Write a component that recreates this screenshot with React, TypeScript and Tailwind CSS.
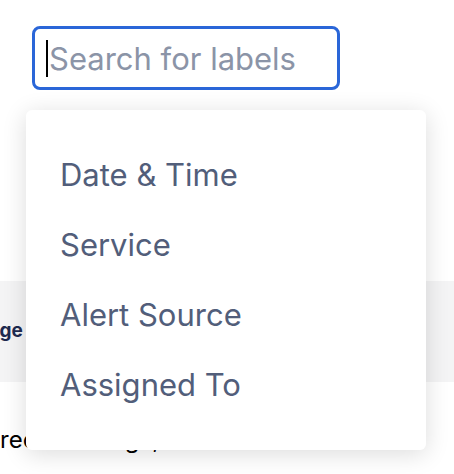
import React from "react";

const items = ["Date & Time", "Service", "Alert Source", "Assigned To"];

export default function App() {
  return (
    <div
      className="relative w-[454px] h-[474px] overflow-hidden bg-white"
      style={{ fontFamily: "Inter, 'Noto Sans', sans-serif" }}
    >
      <div className="pt-[26px] pl-[32px]">
        <div className="flex items-center w-[308px] h-[64px] border-[3px] border-[#2a66d8] rounded-[8px] pl-[11px]">
          <span className="w-[2px] h-[37px] bg-black" />
          <span className="ml-[1px] text-[31px] leading-none text-[#8b94a7]">Search for labels</span>
        </div>
      </div>
      <div className="mt-[191px] h-[101px] bg-[#f4f4f5] flex items-center whitespace-nowrap">
        <span className="-ml-[36px] text-[19px] font-bold text-[#1e2a4f]">Usage</span>
      </div>
      <div className="pt-[46px] whitespace-nowrap text-[24px] text-black leading-none">
        <span>received logs, check it</span>
      </div>
      <div className="absolute left-[26px] top-[110px] w-[400px] h-[340px] bg-white rounded-[6px] shadow-[0_4px_24px_rgba(0,0,0,0.14)] py-[30px]">
        {items.map((it) => (
          <div key={it} className="h-[70px] flex items-center pl-[34px] text-[31px] text-[#525e7a]">
            {it}
          </div>
        ))}
      </div>
    </div>
  );
}
